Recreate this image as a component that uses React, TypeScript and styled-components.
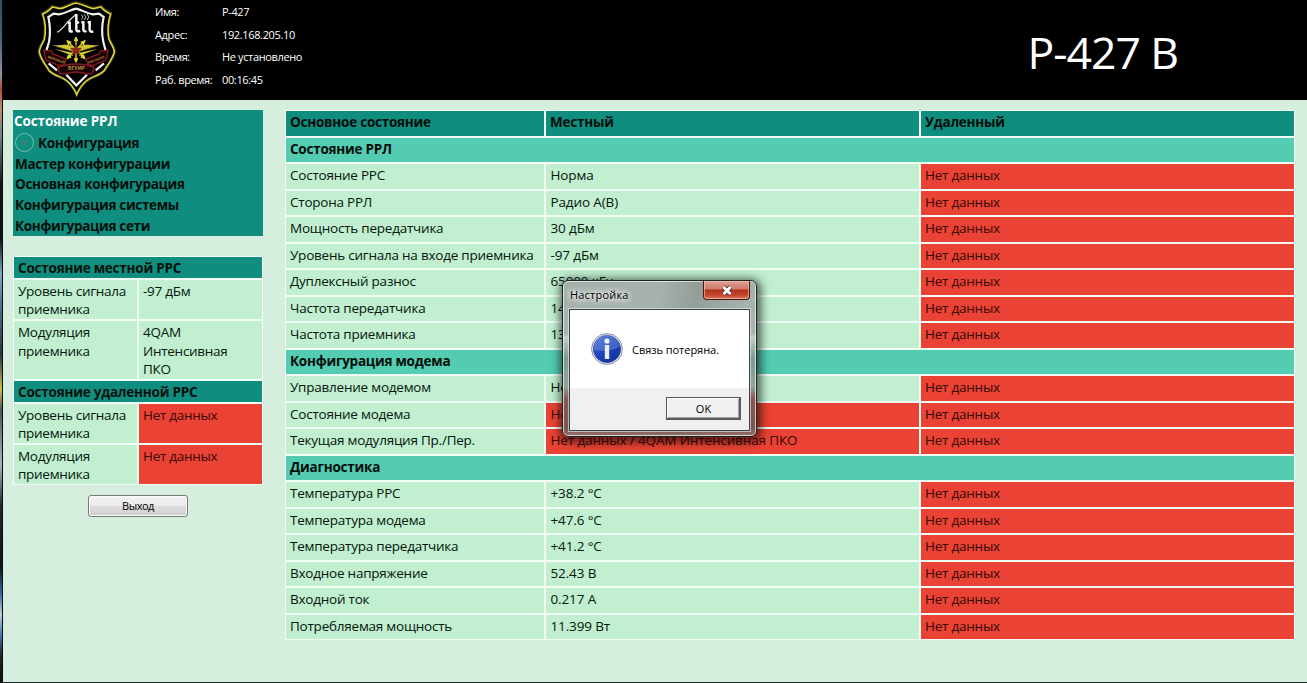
import React from "react";
import styled, { createGlobalStyle } from "styled-components";

const FONT = '"Open Sans", "Noto Sans", "Liberation Sans", sans-serif';

const GlobalStyle = createGlobalStyle`
  * { box-sizing: border-box; }
  html, body { margin: 0; padding: 0; overflow: hidden; }
  body { font-family: ${FONT}; font-size: 14px; color: #04120c; background: #d5eedd; }
`;

const Frame = styled.div`
  display: flex;
  position: relative;
  width: 1307px;
  height: 683px;
  overflow: hidden;
`;

const DesktopEdge = styled.div`
  flex: none;
  width: 3px;
  border-right: 1px solid #0a0c0c;
  background: linear-gradient(
    #33486a 0, #51617c 6%, #8a93a0 11%, #b04a3c 13%, #c08a72 16%, #6f7f8e 20%,
    #11151a 27%, #0e1216 35%, #7fa9c4 40%, #4a6f8c 45%, #2c3440 52%, #c9c04a 57%,
    #4c555c 60%, #a9b5c6 68%, #23272c 74%, #111418 83%, #2f6ca8 87%, #c8cede 90%,
    #3b78b4 93%, #222 96%, #111 100%
  );
`;

const Page = styled.div`
  flex: 1;
  display: flex;
  flex-direction: column;
  background: #d5eedd;
  border-bottom: 1px solid #1d2a26;
`;

const Header = styled.header`
  flex: none;
  display: flex;
  height: 100px;
  background: #000;
  color: #fff;
  overflow: hidden;
`;

const EmblemBox = styled.div`
  flex: none;
  width: 152px;
  padding-left: 22px;
`;

const InfoGrid = styled.dl`
  margin: 0;
  padding-top: 1px;
  display: grid;
  grid-template-columns: 67px 200px;
  grid-auto-rows: 22.5px;
  font-size: 11px;
  line-height: 22px;
  letter-spacing: -0.36px;
  dd { margin: 0; }
`;

const Title = styled.h1`
  margin: 0 129px 0 auto;
  padding-top: 19px;
  font-size: 44.5px;
  line-height: 66px;
  font-weight: 400;
  letter-spacing: -1.05px;
`;

const Body = styled.div`
  flex: 1;
  display: flex;
  align-items: flex-start;
  gap: 22px;
  padding: 10px 0 0 10px;
`;

const Sidebar = styled.aside`
  flex: none;
  width: 250px;
  display: flex;
  flex-direction: column;
`;

const Menu = styled.nav`
  display: flex;
  flex-direction: column;
  height: 126px;
  padding-left: 2px;
  background: #0f8d7e;
  font-weight: 700;
  font-size: 13.5px;
  letter-spacing: -0.32px;
`;

const MenuItem = styled.a<{ $active?: boolean; $height?: number }>`
  display: flex;
  align-items: center;
  gap: 4px;
  height: ${(p) => p.$height ?? 20.7}px;
  margin-left: ${(p) => (p.$active ? -1 : 0)}px;
  letter-spacing: ${(p) => (p.$active ? "-0.12px" : "inherit")};
  color: ${(p) => (p.$active ? "#fff" : "#020d0a")};
  white-space: nowrap;
`;

const Bullet = styled.span`
  width: 19px;
  height: 19px;
  border: 1px solid #7cbcb0;
  border-radius: 50%;
  background: radial-gradient(circle, #4a7d74 0, #0f8d7e 4px);
`;

const SideTable = styled.div`
  margin-top: 20px;
  padding: 1px;
  display: grid;
  grid-template-columns: 123px 123px;
  gap: 2px;
  background: #f1fcf4;
`;

const SideHead = styled.div`
  grid-column: 1 / -1;
  height: 21px;
  padding-left: 4px;
  line-height: 23px;
  background: #0f8d7e;
  font-weight: 700;
  font-size: 13.5px;
  letter-spacing: -0.22px;
  white-space: nowrap;
`;

const SideCell = styled.div<{ $bad?: boolean; $tall?: boolean }>`
  height: ${(p) => (p.$tall ? 58 : 39)}px;
  padding: 2px 0 0 4px;
  line-height: ${(p) => (p.$tall ? 18.5 : 18)}px;
  font-size: 13.5px;
  letter-spacing: -0.28px;
  white-space: pre-line;
  background: ${(p) => (p.$bad ? "#ea4335" : "#c1efd0")};
  color: ${(p) => (p.$bad ? "#370804" : "#06160d")};
`;

const ExitButton = styled.button`
  align-self: center;
  width: 100px;
  height: 22px;
  margin-top: 10px;
  padding: 0;
  border: 1px solid #777b79;
  border-radius: 3px;
  box-shadow: inset 0 0 0 1px #fafafa;
  background: linear-gradient(#f3f3f3, #ebebeb 48%, #dcdcdc 52%, #cfcfcf);
  font: 11px/18px ${FONT};
  letter-spacing: -0.5px;
  color: #000;
`;

const MainTable = styled.div`
  flex: none;
  width: 1010px;
  padding: 1px;
  display: grid;
  grid-template-columns: 258px 373px 373px;
  grid-auto-rows: 24.5px;
  column-gap: 2px;
  row-gap: 2px;
  background: #f1fcf4;
`;

type Tone = "head" | "section" | "ok" | "bad";
const toneFill: Record<Tone, string> = {
  head: "#0f8d7e",
  section: "#53ccb2",
  ok: "#c1efd0",
  bad: "#ea4335",
};
const toneText: Record<Tone, string> = {
  head: "#020d0a",
  section: "#020d0a",
  ok: "#06160d",
  bad: "#370804",
};

const Cell = styled.div<{ $tone: Tone; $value?: boolean }>`
  grid-column: ${(p) => (p.$tone === "section" ? "1 / -1" : "auto")};
  padding-left: ${(p) => (p.$value ? 4.5 : 4)}px;
  line-height: 23px;
  font-size: 13.5px;
  letter-spacing: ${(p) => (p.$value ? -0.13 : -0.23)}px;
  white-space: nowrap;
  background: ${(p) => toneFill[p.$tone]};
  color: ${(p) => toneText[p.$tone]};
  font-weight: ${(p) => (p.$tone === "head" || p.$tone === "section" ? 700 : 400)};
`;

const Dialog = styled.div`
  position: absolute;
  left: 562px;
  top: 280px;
  width: 195px;
  height: 157px;
  padding: 1px 6px 5px;
  display: flex;
  flex-direction: column;
  border: 1px solid #1c2321;
  border-radius: 6px;
  background: linear-gradient(100deg, rgba(255,255,255,0) 45%, rgba(90,100,96,.25) 62%, rgba(255,255,255,0) 85%),
    linear-gradient(#a4b0aa 0, #a9b4af 34%, #c3cdc8 36%, #7c9a94 50%, #8fa39b 68%, #8c5650 76%, #7d5450 94%, #96706c 100%);
  box-shadow: inset 0 0 0 1px rgba(235,245,240,.75), 1px 2px 10px 3px rgba(0,0,0,.62);
  font-size: 11px;
  color: #000;
`;

const TitleBar = styled.div`
  flex: none;
  display: flex;
  justify-content: space-between;
  height: 27px;
  padding-left: 1px;
  line-height: 25px;
  letter-spacing: 0.2px;
  text-shadow: 0 0 6px #fff, 0 0 10px #fff, 0 0 4px #fff;
`;

const CloseButton = styled.button`
  width: 47px;
  height: 19px;
  margin-top: -1px;
  padding: 0;
  display: flex;
  align-items: center;
  justify-content: center;
  border: 1px solid #4a1712;
  border-top: 0;
  border-radius: 0 0 4px 4px;
  box-shadow: inset 0 0 0 1px rgba(255,200,185,.6);
  background: linear-gradient(#dba093, #cf7a6a 45%, #b32f1c 50%, #c24a30 80%, #dc7a5c);
`;

const DialogPane = styled.div`
  flex: 1;
  display: flex;
  flex-direction: column;
  border: 1px solid #3b4442;
  box-shadow: 0 0 0 1px rgba(235,245,240,.6);
  background: #fff;
`;

const Message = styled.div`
  flex: 1;
  display: flex;
  align-items: center;
  gap: 9px;
  padding-left: 21px;
  line-height: 18px;
  letter-spacing: -0.04px;
`;

const MessageText = styled.span`
  padding-top: 2px;
`;

const DialogFooter = styled.div`
  flex: none;
  height: 42px;
  padding: 9px 8px 0 0;
  display: flex;
  justify-content: flex-end;
  background: #f0f0f0;
`;

const OkButton = styled.button`
  width: 75px;
  height: 23px;
  padding: 1px 0 0 1px;
  border: 1px solid #555;
  border-right: 2px solid #5c5c5c;
  border-bottom: 2px solid #5c5c5c;
  box-shadow: inset 1px 1px 0 #fff, inset -1px -1px 0 #a5a5a5;
  background: #f0f0f0;
  font: 11px/18px ${FONT};
  color: #000;
`;

const shield =
  "M153 9 C175 13 188 24 205 26 L228 21 C235 30 246 37 257 42 C248 66 247 98 252 118 C259 134 268 144 268 156 C263 177 248 194 238 211 C222 229 199 229 185 242 C170 254 161 269 155 284 C149 269 140 254 125 242 C111 229 88 229 72 211 C62 194 47 177 43 156 C43 144 51 134 58 118 C63 98 62 66 53 42 C64 37 75 30 82 21 L105 26 C121 24 134 13 153 9 Z";

const rays = [0, 45, 135, 180, 225, 315];

const Emblem = () => (
  <svg width="100" height="102" viewBox="0 0 300 306" fill="none">
    <path d={shield} stroke="#3a3a22" strokeWidth="3" transform="translate(-5 -5) scale(1.033)" />
    <path d={shield} stroke="#d9d23a" strokeWidth="5" />
    <path
      d="M153 26 C172 30 184 40 204 43 L222 41 L236 51 C230 78 230 103 235 126 L242 152 M153 26 C134 30 122 40 102 43 L86 41 L70 51 C76 78 76 103 72 126 L64 152 M71 190 L96 211 M237 190 L212 211 M124 224 L154 256 L186 224"
      stroke="#f2f2f2"
      strokeWidth="6.5"
    />
    <path d="M96 97 C108 92 120 76 128 66 L154 42" stroke="#e6e6e6" strokeWidth="3.5" />
    <path
      d="M128 68 L134 68 V92 Q135 96 143 93 M154 42 V90 Q156 97 165 92 M154 70 L162 66 M169 67 H175 V90 Q177 97 184 92 M188 67 H194 V90 Q196 97 205 94"
      stroke="#f4f4f4"
      strokeWidth="7.5"
    />
    <path d="M170 44 q7 7 0 15 M178 43 q8 8 0 17 M187 42 q8 9 0 18" stroke="#bbb" strokeWidth="3" />
    <g fill="#e6de28" stroke="#e6de28" strokeWidth="3">
      {rays.map((a) => (
        <g key={a} transform={`translate(153 149) rotate(${a})`}>
          <path d="M0 0 V-29" strokeWidth="4" />
          <path d="M-5 -27 H5 L0 -38 Z" />
        </g>
      ))}
    </g>
    <g fill="#d2c634">
      <path d="M147 156 L79 134 C96 138 110 134 124 134 C136 134 143 140 150 146 Z" />
      <path d="M159 156 L227 134 C210 138 196 134 182 134 C170 134 163 140 156 146 Z" />
      <path d="M144 168 L90 147 L144 158 Z M162 168 L216 147 L162 158 Z" />
    </g>
    <path d="M98 141 L142 153 M208 141 L164 153" stroke="#6b6118" strokeWidth="2" />
    <path d="M153 134 l4 11 12 0 -9 8 4 12 -11 -7 -11 7 4 -12 -9 -8 12 0 Z" fill="#98241c" stroke="#5e1a12" strokeWidth="2" />
    <g fill="#180304" stroke="#8a1a22" strokeWidth="4">
      <path d="M57 151 L79 153 L83 161 L124 178 L117 194 L102 197 L64 181 L60 168 Z" />
      <path d="M249 151 L227 153 L223 161 L182 178 L189 194 L204 197 L242 181 L246 168 Z" />
      <path d="M98 202 L122 195 Q154 189 184 195 L208 202 L202 220 L186 222 Q154 210 122 222 L104 220 Z" />
    </g>
    <g fill="#c39a3a" fontFamily="Liberation Sans, sans-serif" fontWeight="700" textAnchor="middle">
      <text x="154" y="211" fontSize="15">БГУИР</text>
      <text x="92" y="182" fontSize="10" transform="rotate(20 92 182)">ВОЕННЫЙ</text>
      <text x="215" y="182" fontSize="9" transform="rotate(-20 215 182)">ФАКУЛЬТЕТ</text>
    </g>
  </svg>
);

const InfoIcon = () => (
  <svg width="32" height="32" viewBox="0 0 32 32">
    <defs>
      <linearGradient id="blue" x1="0" y1="0" x2="1" y2="1">
        <stop offset="0" stopColor="#4a74d8" />
        <stop offset=".5" stopColor="#1c3fb8" />
        <stop offset="1" stopColor="#1230a0" />
      </linearGradient>
    </defs>
    <circle cx="16" cy="16" r="15.4" fill="#e8ebf0" stroke="#8b919c" strokeWidth="1" />
    <circle cx="16" cy="16" r="13.6" fill="url(#blue)" stroke="#23409c" strokeWidth=".8" />
    <path d="M3 17 A13 13 0 0 1 29 13 Q20 20 3 17 Z" fill="#7f9fe8" opacity=".4" />
    <circle cx="16" cy="8" r="2.6" fill="#f4f6fb" />
    <path d="M13.8 12 H18.2 V26 H13.8 Z" fill="#e9edf6" />
  </svg>
);

const CloseGlyph = () => (
  <svg width="12" height="11" viewBox="0 0 12 11">
    <path d="M2.5 2 L9.5 9 M9.5 2 L2.5 9" stroke="#5b3a3a" strokeWidth="4.6" />
    <path d="M2.5 2 L9.5 9 M9.5 2 L2.5 9" stroke="#fff" strokeWidth="2.8" />
  </svg>
);

const NO_DATA = "Нет данных";

const info = [
  ["Имя:", "Р-427"],
  ["Адрес:", "192.168.205.10"],
  ["Время:", "Не установлено"],
  ["Раб. время:", "00:16:45"],
];

const sections: { title: string; rows: [string, string, boolean?][] }[] = [
  {
    title: "Состояние РРЛ",
    rows: [
      ["Состояние РРС", "Норма"],
      ["Сторона РРЛ", "Радио А(В)"],
      ["Мощность передатчика", "30 дБм"],
      ["Уровень сигнала на входе приемника", "-97 дБм"],
      ["Дуплексный разнос", "65000 кГц"],
      ["Частота передатчика", "14"],
      ["Частота приемника", "13"],
    ],
  },
  {
    title: "Конфигурация модема",
    rows: [
      ["Управление модемом", "Нет"],
      ["Состояние модема", "Нет", true],
      ["Текущая модуляция Пр./Пер.", "Нет данных / 4QAM Интенсивная ПКО", true],
    ],
  },
  {
    title: "Диагностика",
    rows: [
      ["Температура РРС", "+38.2 °C"],
      ["Температура модема", "+47.6 °C"],
      ["Температура передатчика", "+41.2 °C"],
      ["Входное напряжение", "52.43 В"],
      ["Входной ток", "0.217 А"],
      ["Потребляемая мощность", "11.399 Вт"],
    ],
  },
];

export default function App() {
  return (
    <Frame>
      <GlobalStyle />
      <DesktopEdge />
      <Page>
        <Header>
          <EmblemBox>
            <Emblem />
          </EmblemBox>
          <InfoGrid>
            {info.map(([name, value]) => (
              <React.Fragment key={name}>
                <dt>{name}</dt>
                <dd>{value}</dd>
              </React.Fragment>
            ))}
          </InfoGrid>
          <Title>Р-427 В</Title>
        </Header>
        <Body>
          <Sidebar>
            <Menu>
              <MenuItem $active $height={22}>Состояние РРЛ</MenuItem>
              <MenuItem $height={21.5}>
                <Bullet />
                Конфигурация
              </MenuItem>
              <MenuItem>Мастер конфигурации</MenuItem>
              <MenuItem>Основная конфигурация</MenuItem>
              <MenuItem>Конфигурация системы</MenuItem>
              <MenuItem>Конфигурация сети</MenuItem>
            </Menu>
            <SideTable>
              <SideHead>Состояние местной РРС</SideHead>
              <SideCell>{"Уровень сигнала\nприемника"}</SideCell>
              <SideCell>-97 дБм</SideCell>
              <SideCell $tall>{"Модуляция\nприемника"}</SideCell>
              <SideCell $tall>{"4QAM\nИнтенсивная\nПКО"}</SideCell>
              <SideHead>Состояние удаленной РРС</SideHead>
              <SideCell>{"Уровень сигнала\nприемника"}</SideCell>
              <SideCell $bad>{NO_DATA}</SideCell>
              <SideCell>{"Модуляция\nприемника"}</SideCell>
              <SideCell $bad>{NO_DATA}</SideCell>
            </SideTable>
            <ExitButton>Выход</ExitButton>
          </Sidebar>
          <MainTable>
            <Cell $tone="head">Основное состояние</Cell>
            <Cell $tone="head">Местный</Cell>
            <Cell $tone="head">Удаленный</Cell>
            {sections.map((s) => (
              <React.Fragment key={s.title}>
                <Cell $tone="section">{s.title}</Cell>
                {s.rows.map(([name, value, bad]) => (
                  <React.Fragment key={name}>
                    <Cell $tone="ok">{name}</Cell>
                    <Cell $tone={bad ? "bad" : "ok"} $value>
                      {value}
                    </Cell>
                    <Cell $tone="bad">{NO_DATA}</Cell>
                  </React.Fragment>
                ))}
              </React.Fragment>
            ))}
          </MainTable>
        </Body>
      </Page>
      <Dialog>
        <TitleBar>
          Настройка
          <CloseButton aria-label="Закрыть">
            <CloseGlyph />
          </CloseButton>
        </TitleBar>
        <DialogPane>
          <Message>
            <InfoIcon />
            <MessageText>Связь потеряна.</MessageText>
          </Message>
          <DialogFooter>
            <OkButton>OK</OkButton>
          </DialogFooter>
        </DialogPane>
      </Dialog>
    </Frame>
  );
}
